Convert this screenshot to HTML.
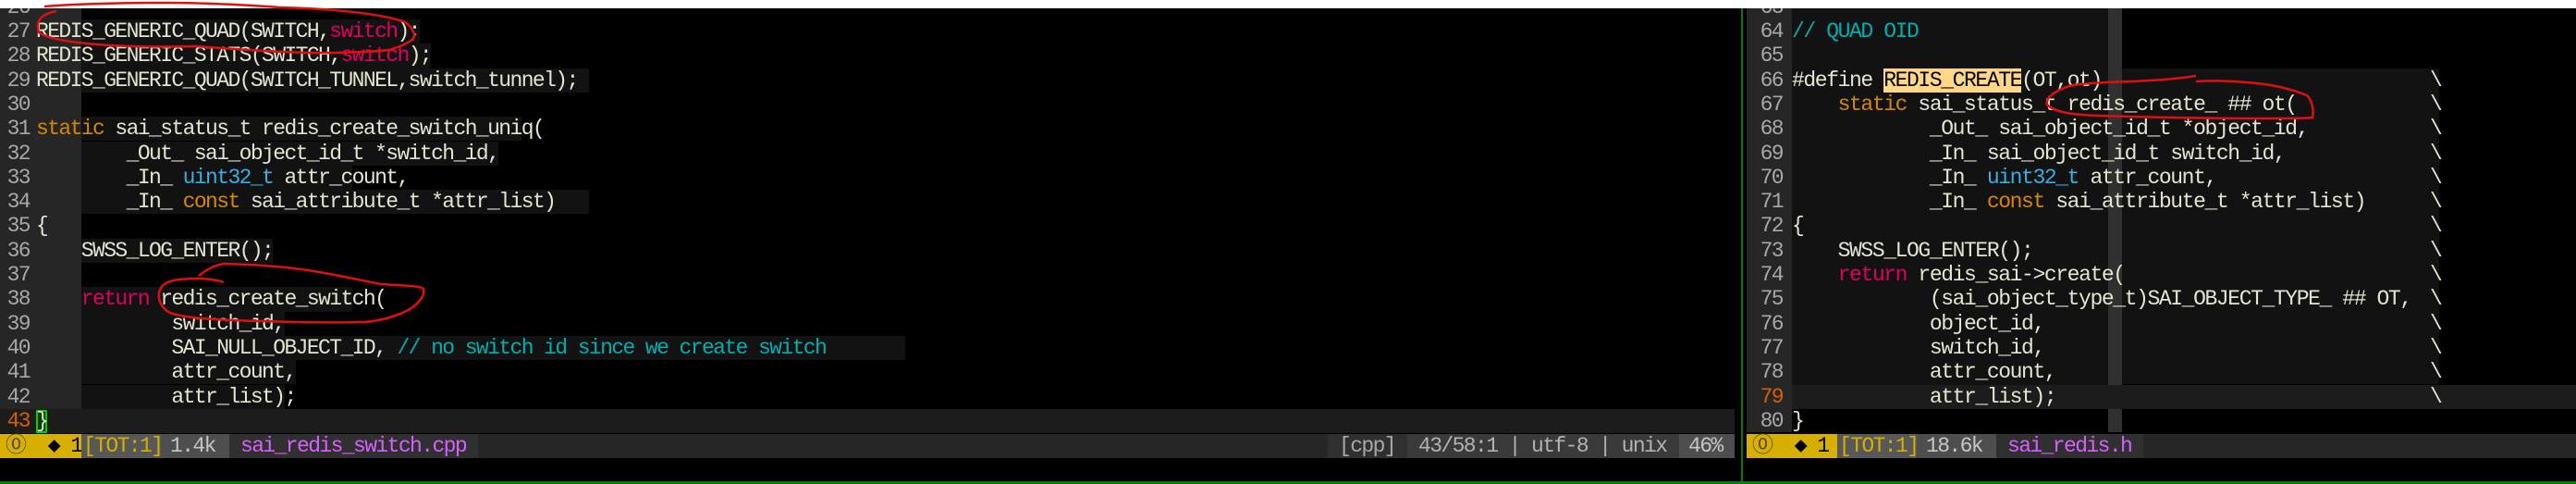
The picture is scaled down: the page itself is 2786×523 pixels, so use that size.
<!DOCTYPE html>
<html><head><meta charset="utf-8"><style>
*{margin:0;padding:0;box-sizing:border-box}
body{width:2786px;height:523px;background:#000;position:relative;overflow:hidden;font-family:"Liberation Mono","DejaVu Sans Mono",monospace;font-size:23px;letter-spacing:-1.6px;color:#e4e4d0}
.abs{position:absolute}
.row{position:absolute;height:26.3px;line-height:26.3px;white-space:pre}
.num{position:absolute;color:#a8a8a8;text-align:right;width:32px}
.k{color:#d78700}.p{color:#e0005f}.c{color:#00afaf}.b{color:#36b0e0}
.sb{position:absolute;top:469px;height:26px;line-height:26px;white-space:pre}
</style></head><body>
<div class="abs" style="left:0;top:0;width:88px;height:467px;background:#262626"></div>
<div class="abs" style="left:0;top:442px;width:1876px;height:26px;background:#1c1c1c"></div>
<div id="L"></div>
<div id="R"></div>
<div class="abs" style="left:1883px;top:0;width:2px;height:523px;background:#0a7a0a"></div>
<div class="abs" style="left:0;top:520px;width:2786px;height:3px;background:#0a7a0a"></div>

<div class="sb" style="left:0;width:1876px;background:#262626"></div>
<div class="sb" style="left:0;width:88px;background:#d7af00;color:#5a4a00;padding-left:6px">⓪ <span style="color:#000"> ◆ 1</span></div>
<div class="sb" style="left:88px;width:86px;background:#585858;color:#d7af00;padding-left:2px">[TOT:1]</div>
<div class="sb" style="left:174px;width:74px;background:#4e4e4e;color:#c6c6c6;padding-left:10px">1.4k</div>
<div class="sb" style="left:248px;width:269px;background:#303030;color:#d75fff;padding-left:12px">sai_redis_switch.cpp</div>
<div class="sb" style="left:1436px;width:86px;background:#303030;color:#a8a8a8;padding-left:12px">[cpp]</div>
<div class="sb" style="left:1522px;width:294px;background:#3a3a3a;color:#b2b2b2;padding-left:12px">43/58:1 | utf-8 | unix</div>
<div class="sb" style="left:1816px;width:60px;background:#4e4e4e;color:#c6c6c6;padding-left:10px">46%</div>
<div class="sb" style="left:1889px;width:897px;background:#262626"></div>
<div class="sb" style="left:1889px;width:98px;background:#d7af00;color:#5a4a00;padding-left:6px">⓪ <span style="color:#000"> ◆ 1</span></div>
<div class="sb" style="left:1987px;width:86px;background:#585858;color:#d7af00;padding-left:2px">[TOT:1]</div>
<div class="sb" style="left:2073px;width:86px;background:#4e4e4e;color:#c6c6c6;padding-left:10px">18.6k</div>
<div class="sb" style="left:2159px;width:159px;background:#303030;color:#d75fff;padding-left:12px">sai_redis.h</div>

<div class="abs" style="left:0;top:0;width:2786px;height:9px;background:#fff"></div>
<svg class="abs" style="left:0;top:0" width="2786" height="523">
<g fill="none" stroke="#e01010" stroke-width="2.5">
<path d="M61 12 C45 15 38 22 42 35 C60 48 140 52 212 50 C280 55 330 58 364 57 C400 56 420 55 424 53 C440 48 450 42 448 37 C445 28 440 25 436 23 C400 12 340 9 303 8 C250 4 200 3 182 3 C120 3 70 5 48 7"/>
<path d="M215 298 C225 290 235 286 242 285 C280 286 310 288 339 293 C370 298 395 304 412 307 C440 309 455 309 458 312 C460 320 452 328 445 333 C430 342 410 347 394 348 C350 349 310 348 285 347 C240 346 195 344 182 337 C172 330 170 320 173 313 C176 306 185 303 194 302 C215 300 230 301 242 305"/>
<path d="M2375 82 C2350 86 2325 87 2304 88 C2275 89 2250 90 2238 93 C2222 98 2212 106 2214 113 C2222 122 2245 124 2268 125 C2330 127 2400 128 2447 128 C2475 128 2495 128 2501 127 C2503 118 2500 108 2495 103 C2480 97 2460 92 2441 90 C2410 87 2390 87 2375 88"/>
</g></svg>
<script>
const CW=12.2,RH=26.3,T0=-5.3;
const left=[
[26,''],[27,'REDIS_GENERIC_QUAD(SWITCH,<span class=p>switch</span>);'],
[28,'REDIS_GENERIC_STATS(SWITCH,<span class=p>switch</span>);'],
[29,'REDIS_GENERIC_QUAD(SWITCH_TUNNEL,switch_tunnel);'],[30,''],
[31,'<span class=k>static</span> sai_status_t redis_create_switch_uniq('],
[32,'        _Out_ sai_object_id_t *switch_id,'],
[33,'        _In_ <span class=b>uint32_t</span> attr_count,'],
[34,'        _In_ <span class=k>const</span> sai_attribute_t *attr_list)'],
[35,'{'],[36,'    SWSS_LOG_ENTER();'],[37,''],
[38,'    <span class=p>return</span> redis_create_switch('],
[39,'            switch_id,'],
[40,'            SAI_NULL_OBJECT_ID, <span class=c>// no switch id since we create switch</span>'],
[41,'            attr_count,'],[42,'            attr_list);'],[43,'']];
const lens={27:34,28:35,29:49,31:43,32:41,33:28,34:49,35:1,36:21,38:28,39:22,40:77,41:23,42:22};
let h='';
left.forEach((r,i)=>{const top=T0+i*RH;const n=r[0];
 if(lens[n]){h+=`<div class="abs" style="left:88px;top:${top}px;width:${(lens[n]-4)*CW}px;height:${RH}px;background:#121212"></div>`;}
 h+=`<div class="num" style="left:0;top:${top}px;line-height:${RH}px;${n==43?'color:#d75f00':''}">${n}</div>`;
 h+=`<div class="row" style="left:39px;top:${top}px">${r[1]}</div>`;});
h+=`<div class="abs" style="left:39px;top:443px;width:12px;height:25px;border:2px solid #00d000;background:#0a3a0a"></div>`;
h+=`<div class="row" style="left:39px;top:442px;color:#e4e4d0">}</div>`;
document.getElementById('L').innerHTML=h;
const right=[
[63,''],[64,'<span class=c>// QUAD OID</span>'],[65,''],
[66,'#define <span style="background:#ffd787;color:#000">REDIS_CREATE</span>(OT,ot)'],
[67,'    <span class=k>static</span> sai_status_t redis_create_ ## ot('],
[68,'            _Out_ sai_object_id_t *object_id,'],
[69,'            _In_ sai_object_id_t switch_id,'],
[70,'            _In_ <span class=b>uint32_t</span> attr_count,'],
[71,'            _In_ <span class=k>const</span> sai_attribute_t *attr_list)'],
[72,'{'],[73,'    SWSS_LOG_ENTER();'],
[74,'    <span class=p>return</span> redis_sai-&gt;create('],
[75,'            (sai_object_type_t)SAI_OBJECT_TYPE_ ## OT,'],
[76,'            object_id,'],[77,'            switch_id,'],[78,'            attr_count,'],[79,'            attr_list);'],[80,'}']];
h='';
h+=`<div class="abs" style="left:1889px;top:0;width:49px;height:467px;background:#262626"></div>`;
h+=`<div class="abs" style="left:1938px;top:0;width:342px;height:442px;background:#121212"></div>`;
h+=`<div class="abs" style="left:2280px;top:0;width:15px;height:467px;background:#303030"></div>`;
h+=`<div class="abs" style="left:2295px;top:${T0+3*RH}px;width:343px;height:${13*RH}px;background:#121212"></div>`;
h+=`<div class="abs" style="left:1938px;top:${T0+16*RH}px;width:848px;height:${RH}px;background:#1c1c1c"></div>`;
h+=`<div class="abs" style="left:1938px;top:${T0+17*RH}px;width:342px;height:${RH}px;background:#000"></div>`;
right.forEach((r,i)=>{const top=T0+i*RH;const n=r[0];
 h+=`<div class="num" style="left:1896px;top:${top}px;line-height:${RH}px;${n==79?'color:#d75f00':''}">${n}</div>`;
 h+=`<div class="row" style="left:1938px;top:${top}px;letter-spacing:-1.4px">${r[1]}</div>`;
 if(n>=66&&n<=79)h+=`<div class="row" style="left:2628px;top:${top}px">\\</div>`;});
document.getElementById('R').innerHTML=h;
</script>
</body></html>
